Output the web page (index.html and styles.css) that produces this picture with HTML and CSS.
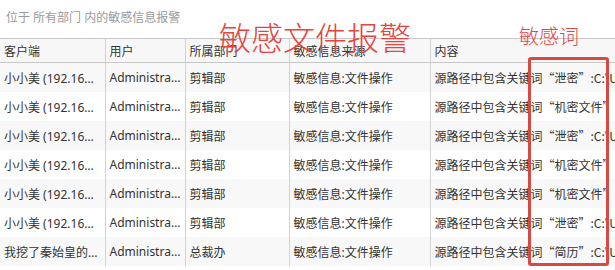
FILE: index.html
```html
<!DOCTYPE html>
<html lang="zh-CN">
<head>
<meta charset="utf-8">
<title>敏感信息报警</title>
<link rel="stylesheet" href="styles.css">
</head>
<body>
<div class="page">
  <div class="caption">位于 所有部门 内的敏感信息报警</div>
  <table class="grid">
    <colgroup>
      <col class="c1"><col class="c2"><col class="c3"><col class="c4"><col class="c5">
    </colgroup>
    <thead>
      <tr><th>客户端</th><th>用户</th><th>所属部门</th><th>敏感信息来源</th><th>内容</th></tr>
    </thead>
    <tbody>
      <tr><td>小小美 (192.168.1.23)</td><td>Administrator</td><td>剪辑部</td><td>敏感信息:文件操作</td><td class="content">源路径中包含关键词“泄密”:C:\Users\Administrator\Desktop\泄密.docx</td></tr>
      <tr><td>小小美 (192.168.1.23)</td><td>Administrator</td><td>剪辑部</td><td>敏感信息:文件操作</td><td class="content">源路径中包含关键词“机密文件”:C:\Users\Administrator\Desktop</td></tr>
      <tr><td>小小美 (192.168.1.23)</td><td>Administrator</td><td>剪辑部</td><td>敏感信息:文件操作</td><td class="content">源路径中包含关键词“泄密”:C:\Users\Administrator\Desktop\泄密.docx</td></tr>
      <tr><td>小小美 (192.168.1.23)</td><td>Administrator</td><td>剪辑部</td><td>敏感信息:文件操作</td><td class="content">源路径中包含关键词“机密文件”:C:\Users\Administrator\Desktop</td></tr>
      <tr><td>小小美 (192.168.1.23)</td><td>Administrator</td><td>剪辑部</td><td>敏感信息:文件操作</td><td class="content">源路径中包含关键词“机密文件”:C:\Users\Administrator\Desktop</td></tr>
      <tr><td>小小美 (192.168.1.23)</td><td>Administrator</td><td>剪辑部</td><td>敏感信息:文件操作</td><td class="content">源路径中包含关键词“泄密”:C:\Users\Administrator\Desktop\泄密.docx</td></tr>
      <tr><td>我挖了秦始皇的坟 (192.168.1.8)</td><td>Administrator</td><td>总裁办</td><td>敏感信息:文件操作</td><td class="content">源路径中包含关键词“简历”:C:\Users\Administrator\Desktop\简历.docx</td></tr>
    </tbody>
  </table>
  <div class="note-title">敏感文件报警</div>
  <div class="note-word">敏感词</div>
  <div class="note-box"></div>
</div>
</body>
</html>
```
FILE: styles.css
```css
html, body {
  margin: 0;
  padding: 0;
  background: #ffffff;
  overflow: hidden;
}
.page {
  position: relative;
  width: 615px;
  height: 270px;
  overflow: hidden;
  font-family: "Noto Sans", "Noto Sans CJK SC", sans-serif;
  font-size: 12px;
  color: #333333;
}
.caption {
  height: 38px;
  line-height: 36px;
  padding-left: 6px;
  color: #9a9a9a;
  font-size: 12px;
}
.grid {
  table-layout: fixed;
  border-collapse: collapse;
  width: 900px;
}
.c1 { width: 105px; }
.c2 { width: 80px; }
.c3 { width: 104px; }
.c4 { width: 141px; }
.c5 { width: 470px; }
.grid th, .grid td {
  padding: 0 4px;
  text-align: left;
  font-weight: normal;
  white-space: nowrap;
  overflow: hidden;
  text-overflow: ellipsis;
  border-left: 1px solid #d2d2d2;
}
.grid th:first-child, .grid td:first-child {
  border-left: none;
}
.grid th {
  height: 23px;
  background: #f7f7f7;
  border-top: 1px solid #c8c8c8;
  border-bottom: 1px solid #c8c8c8;
}
.grid td {
  height: 29px;
  background: #ffffff;
}
.grid tbody tr:nth-child(odd) td {
  background: #f8f8f8;
}
.grid td.content {
  text-overflow: clip;
  font-family: "Noto Sans CJK SC", sans-serif;
}
.note-title {
  position: absolute;
  left: 219px;
  top: 16px;
  font-family: "Noto Sans CJK SC", sans-serif;
  font-size: 32px;
  line-height: 40px;
  color: #e5453e;
  font-weight: 300;
}
.note-word {
  position: absolute;
  left: 519px;
  top: 22px;
  font-family: "Noto Sans CJK SC", sans-serif;
  font-size: 20px;
  line-height: 28px;
  color: #e5453e;
  font-weight: 300;
}
.note-box {
  position: absolute;
  left: 528px;
  top: 57px;
  width: 75px;
  height: 203px;
  border: 3px solid #d64a43;
  border-radius: 3px;
}
```
